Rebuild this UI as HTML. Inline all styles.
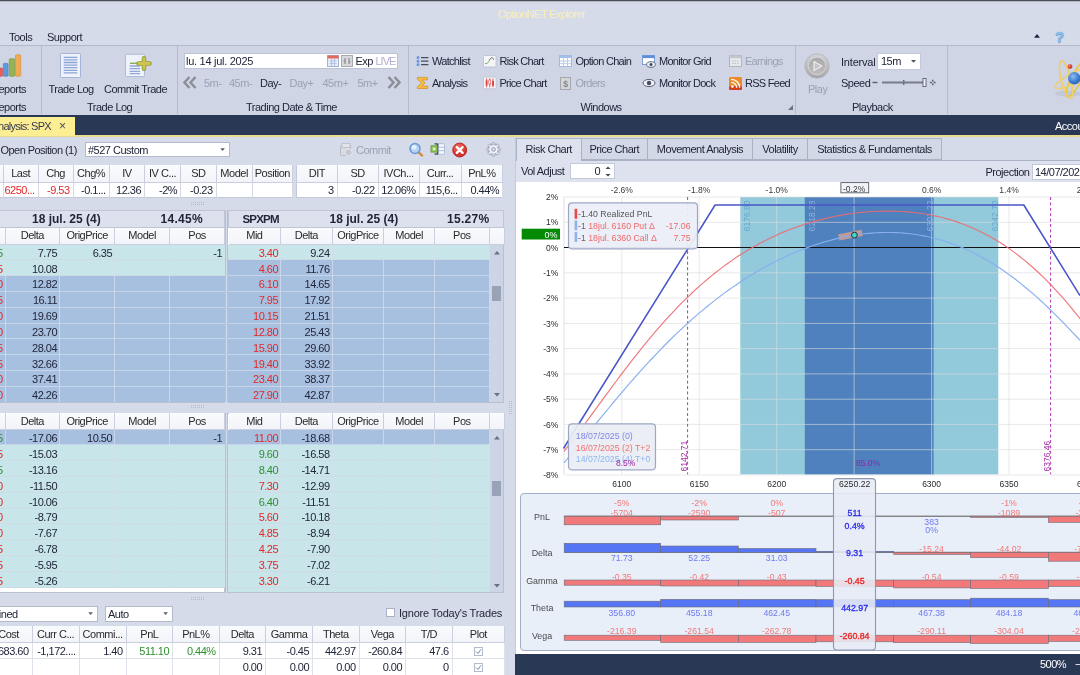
<!DOCTYPE html><html><head><meta charset="utf-8"><title>OptionNET Explorer</title><style>
*{box-sizing:border-box;margin:0;padding:0}
html,body{width:1080px;height:675px;overflow:hidden;background:#d6dbe9}
body{will-change:transform}
body{font-family:"Liberation Sans",sans-serif;font-size:11px;letter-spacing:-0.5px;color:#22263a;position:relative}
.a{position:absolute;white-space:nowrap}
.t{position:absolute;white-space:nowrap;line-height:14px;height:14px}
.c{text-align:center}.r{text-align:right}
.g{color:#9aa2b3}
.sep{position:absolute;width:1px;background:#b4bbcd;top:46px;height:68px}
.box{position:absolute;background:#fff;border:1px solid #b3bacb}
.hd{position:absolute;background:linear-gradient(#fafbfd,#f2f4f9);border-right:1px solid #c9cfde;border-bottom:1px solid #c9cfde;text-align:center;white-space:nowrap;overflow:hidden;color:#2a2a2a}
.cell{position:absolute;white-space:nowrap;overflow:hidden;text-align:right;padding-right:3px}
.red{color:#e02828}.grn{color:#2f8f2f}
.ch{font-family:"Liberation Sans",sans-serif;letter-spacing:0}
svg{position:absolute;overflow:visible}
</style></head><body>
<div class="a" style="left:0;top:0;width:1080px;height:1px;background:#4d4d55"></div>
<div class="a" style="left:0;top:1px;width:1080px;height:1px;background:#8e93a0;opacity:.5"></div>
<div class="t " style="left:498px;top:7px;color:#fbefb9;letter-spacing:-0.6px">OptionNET Explorer</div>
<div class="t " style="left:9px;top:30px;">Tools</div>
<div class="t " style="left:47px;top:30px;">Support</div>
<div class="a" style="left:0;top:45px;width:1080px;height:70px;background:#cfd5e5;border-top:1px solid #b1b9cb"></div>
<div class="sep" style="left:41px"></div>
<div class="sep" style="left:177px"></div>
<div class="sep" style="left:408px"></div>
<div class="sep" style="left:795px"></div>
<div class="sep" style="left:947px"></div>
<div class="a" style="left:0;top:115px;width:1080px;height:21px;background:#293955"></div>
<div class="a" style="left:0;top:135px;width:1080px;height:2px;background:#e9dc8f"></div>
<div class="a" style="left:0;top:117px;width:75px;height:19px;background:#fdee94"></div>
<div class="t " style="left:-8.5px;top:119px;color:#333a50;letter-spacing:-0.75px">Analysis: SPX</div>
<div class="t " style="left:59px;top:118.5px;font-size:12px;color:#44495c;letter-spacing:0">×</div>
<div class="t " style="left:1055px;top:119px;color:#fff">Account</div>
<div class="t " style="left:-9px;top:82px;">Reports</div>
<div class="t " style="left:-9px;top:100px;">Reports</div>
<div class="t " style="left:48.5px;top:82px;">Trade Log</div>
<div class="t " style="left:104px;top:82px;">Commit Trade</div>
<div class="t " style="left:87px;top:100px;">Trade Log</div>
<div class="t " style="left:246px;top:100px;">Trading Date &amp; Time</div>
<div class="t " style="left:580.5px;top:100px;">Windows</div>
<div class="t " style="left:852px;top:100px;">Playback</div>
<svg style="left:0;top:53px" width="22" height="25"><defs><linearGradient id="gl" x1="0" x2="1"><stop offset="0" stop-color="#fff" stop-opacity=".45"/><stop offset=".5" stop-color="#fff" stop-opacity="0"/><stop offset="1" stop-color="#000" stop-opacity=".12"/></linearGradient></defs><rect x="-2" y="15" width="4.7" height="8.3" rx="1" fill="#e8605a" stroke="#c94a44" stroke-width=".6"/><rect x="3.3" y="10.3" width="4.8" height="13" rx="1" fill="#5f98dc" stroke="#4a7ec0" stroke-width=".6"/><rect x="9.2" y="5.7" width="5.6" height="17.6" rx="1" fill="#93b356" stroke="#78963f" stroke-width=".6"/><rect x="15.5" y="1.7" width="5.2" height="21.6" rx="1" fill="#f0aa52" stroke="#d48a38" stroke-width=".6"/><rect x="-2" y="1" width="23" height="23" fill="url(#gl)" opacity=".0"/></svg>
<svg style="left:60px;top:53px" width="21" height="25"><rect x="0.5" y="0.5" width="20" height="24" rx="1" fill="#eef2fa" stroke="#a3b4d6"/><g stroke="#8ba3d6" stroke-width="1.3"><path d="M3.7 4.3h13.6M3.7 6.9h13.6M3.7 9.5h13.6M3.7 12.1h13.6M3.7 14.7h13.6M3.7 17.3h13.6M3.7 19.9h13.6"/></g></svg>
<svg style="left:125px;top:53px" width="25" height="25"><rect x="0.5" y="1.2" width="19" height="22.4" rx="1" fill="#eef2fa" stroke="#acb9d6"/><g stroke="#93a8d8" stroke-width="1.3"><path d="M4.6 13h10.4M4.6 15.7h10.4M4.6 18.3h10.4M4.6 20.6h10.4"/></g><path d="M5 10.3h8" stroke="#88ad52" stroke-width="1.4"/><path d="M19 5.2v10.6M13.5 10.5h11" stroke="#8fa138" stroke-width="4.6" stroke-linecap="round"/><path d="M19 5.4v10.2M13.7 10.5h10.6" stroke="#cfc24e" stroke-width="2.8" stroke-linecap="round"/></svg>
<div class="box" style="left:184px;top:52.8px;width:214px;height:16.6px;border-color:#bcc3d4"></div>
<div class="t " style="left:186px;top:54.3px;letter-spacing:-0.28px">lu. 14 jul. 2025</div>
<svg style="left:327px;top:55px" width="12" height="12"><rect x="0.5" y="0.5" width="11" height="11" fill="#e6ecf8" stroke="#a7b2d0"/><rect x="0.5" y="0.5" width="11" height="3" fill="#e36a58"/><path d="M2.5 6h7M2.5 8.5h7M4.5 4v7M7.5 4v7" stroke="#b4c4e4" stroke-width="1"/></svg>
<svg style="left:341px;top:55px" width="12" height="12"><rect x="0.5" y="0.5" width="11" height="11" fill="#d9d9dd" stroke="#a9a9b2"/><path d="M4 3v6M8 3v6M4 6h-1.5M8 7h1.5" stroke="#7d7d88" stroke-width="1"/></svg>
<div class="t " style="left:355.5px;top:54px;">Exp</div>
<div class="t " style="left:375.5px;top:54px;color:#b3aed0;letter-spacing:-1px">LIVE</div>
<svg style="left:183px;top:76px" width="14" height="13"><path d="M6.5 1L1.5 6.5l5 5.5M12.5 1l-5 5.5 5 5.5" fill="none" stroke="#8b8f98" stroke-width="2.5"/></svg>
<svg style="left:387px;top:76px" width="14" height="13"><path d="M1.5 1l5 5.5-5 5.5M7.5 1l5 5.5-5 5.5" fill="none" stroke="#8b8f98" stroke-width="2.5"/></svg>
<div class="t g" style="left:204px;top:75.5px;">5m-</div>
<div class="t g" style="left:229px;top:75.5px;">45m-</div>
<div class="t " style="left:260px;top:75.5px;">Day-</div>
<div class="t g" style="left:289.5px;top:75.5px;">Day+</div>
<div class="t g" style="left:322.5px;top:75.5px;">45m+</div>
<div class="t g" style="left:357.5px;top:75.5px;">5m+</div>
<div class="t " style="left:432px;top:54.4px;letter-spacing:-0.72px">Watchlist</div>
<div class="t " style="left:432px;top:76.4px;letter-spacing:-0.72px">Analysis</div>
<div class="t " style="left:499.5px;top:54.4px;letter-spacing:-0.72px">Risk Chart</div>
<div class="t " style="left:499.5px;top:76.4px;letter-spacing:-0.72px">Price Chart</div>
<div class="t " style="left:575.5px;top:54.4px;letter-spacing:-0.72px">Option Chain</div>
<div class="t g" style="left:575.5px;top:76.4px;letter-spacing:-0.72px">Orders</div>
<div class="t " style="left:659px;top:54.4px;letter-spacing:-0.72px">Monitor Grid</div>
<div class="t " style="left:659px;top:76.4px;letter-spacing:-0.72px">Monitor Dock</div>
<div class="t g" style="left:745px;top:54.4px;letter-spacing:-0.72px">Earnings</div>
<div class="t " style="left:745px;top:76.4px;letter-spacing:-0.72px">RSS Feed</div>
<svg style="left:416px;top:55px" width="13" height="12"><g fill="#6fa3e6" stroke="#4f84cc" stroke-width=".5"><circle cx="2" cy="2.6" r="1.2"/><circle cx="2" cy="6.2" r="1.2"/><circle cx="2" cy="9.7" r="1.2"/></g><path d="M5 2.6h7.4M5 6.2h7.4M5 9.7h7.4" stroke="#474d5e" stroke-width="1.3"/></svg>
<svg style="left:416px;top:76px" width="13" height="14"><path d="M1.4 1.4h10v2.5H6l3.2 3-3.4 3.2h6v2.4H1.4v-2l4.2-3.6-4.2-3.5z" fill="#f4bd4a" stroke="#d8932a" stroke-width=".8" stroke-linejoin="round"/></svg>
<svg style="left:483px;top:55px" width="14" height="13"><rect x="0.5" y="0.5" width="12.6" height="11.5" rx="1" fill="#f4f5f9" stroke="#c0c6d6"/><path d="M2 8.6c3 .2 3.2-1 4.4-3.4" fill="none" stroke="#7fb35c" stroke-width="1"/><path d="M6.4 5.2C7.6 2.6 9.6 1.6 10.6 4.6" fill="none" stroke="#5b6070" stroke-width="1"/></svg>
<svg style="left:483px;top:76px" width="14" height="14"><rect x="0.5" y="1" width="12.6" height="11.8" rx="1" fill="#f8f8fb" stroke="#c0c6d6"/><path d="M3.6 2.4v9M6.8 2.4v9M10 2.4v9" stroke="#d64040" stroke-width=".9"/><rect x="2.6" y="4.4" width="2" height="5" fill="#e04848"/><rect x="5.8" y="4" width="2" height="4" fill="#fff" stroke="#d64040" stroke-width=".6"/><rect x="9" y="4.8" width="2" height="5" fill="#e04848"/></svg>
<svg style="left:559px;top:55px" width="13" height="12"><rect x="0.5" y="0.5" width="12" height="11" fill="#fff" stroke="#a3b9df"/><rect x="0.5" y="0.5" width="12" height="2.5" fill="#a3c0ea"/><path d="M4.5 3v8M8.5 3v8M1 6h11M1 8.7h11" stroke="#b9cdec" stroke-width="1"/></svg>
<svg style="left:560px;top:77px" width="11" height="13"><rect x="0.5" y="0.5" width="10" height="12" fill="#d5d6da" stroke="#a5a7ad"/><text x="5.5" y="10" font-size="9" text-anchor="middle" fill="#85878f" font-family="Liberation Sans, sans-serif" font-weight="bold">$</text></svg>
<svg style="left:642px;top:55px" width="14" height="13"><rect x="0.5" y="0.5" width="12" height="9" fill="#fff" stroke="#7d9fd6"/><rect x="0.5" y="0.5" width="12" height="2.6" fill="#5f8fd8"/><ellipse cx="9" cy="9.5" rx="4.4" ry="2.8" fill="#eef1f8" stroke="#555c70" stroke-width=".9"/><circle cx="9" cy="9.5" r="1.5" fill="#3e4660"/></svg>
<svg style="left:642px;top:78px" width="14" height="10"><ellipse cx="7" cy="5" rx="6" ry="3.6" fill="#f2f3f8" stroke="#5b6174" stroke-width="1"/><circle cx="7" cy="5" r="2.2" fill="#454c66"/></svg>
<svg style="left:729px;top:55px" width="13" height="12"><rect x="0.5" y="0.5" width="12" height="11" fill="#e6e7ec" stroke="#b3b5bf"/><rect x="0.5" y="0.5" width="12" height="2.6" fill="#c3c5cf"/><path d="M3 6h7M3 8.5h7" stroke="#bfc1cb" stroke-width="1.2" stroke-dasharray="1.5 1"/></svg>
<svg style="left:729px;top:77px" width="13" height="13"><rect x="0" y="0" width="13" height="13" rx="1.5" fill="#ee8a2a"/><rect x="0" y="9" width="13" height="4" rx="1.5" fill="#d4401e"/><circle cx="3.4" cy="9.6" r="1.3" fill="#fff"/><path d="M2.3 5.4a5.4 5.4 0 0 1 5.4 5.4M2.3 2.4a8.4 8.4 0 0 1 8.4 8.4" fill="none" stroke="#fff" stroke-width="1.4"/></svg>
<svg style="left:788px;top:105px" width="5" height="5"><path d="M5 0v5H0z" fill="#6a7186"/></svg>
<svg style="left:804px;top:53px" width="26" height="26"><defs><linearGradient id="pg" x1="0" y1="0" x2="0" y2="1"><stop offset="0" stop-color="#d4d4d7"/><stop offset="1" stop-color="#a6a4a6"/></linearGradient><linearGradient id="pg2" x1="0" y1="0" x2="0" y2="1"><stop offset="0" stop-color="#a9a8aa"/><stop offset="1" stop-color="#bfbdbe"/></linearGradient></defs><circle cx="13" cy="13" r="12.2" fill="url(#pg)" stroke="#b0b2ba" stroke-width=".8"/><circle cx="13" cy="13" r="8.8" fill="url(#pg2)" stroke="#d8d9dd" stroke-width=".8"/><path d="M10 8.4l7.8 4.6-7.8 4.6z" fill="#c4c5ca" stroke="#efeff2" stroke-width="1.1" stroke-linejoin="round"/></svg>
<div class="t g" style="left:808px;top:82px;">Play</div>
<div class="t " style="left:841px;top:54.5px;letter-spacing:-0.2px">Interval</div>
<div class="t " style="left:841px;top:75.5px;">Speed</div>
<div class="box" style="left:877px;top:52.6px;width:43.5px;height:17px;border-color:#c3c9d8"></div>
<div class="t " style="left:881px;top:54px;">15m</div>
<svg style="left:910.5px;top:60px" width="5" height="3"><path d="M0 0h5L2.5 2.8z" fill="#4a5064"/></svg>
<svg style="left:872px;top:76px" width="66" height="13"><path d="M0.5 6.5h5" stroke="#5a6072" stroke-width="1.4"/><path d="M10 6.5h43" stroke="#777c8c" stroke-width="1.8"/><path d="M31.7 4v5" stroke="#6e7486" stroke-width="1.6"/><rect x="51" y="2.5" width="3" height="8" fill="#f4f5f9" stroke="#5a6072" stroke-width=".9"/><path d="M58 6.5h5.5M60.75 3.7v5.6" stroke="#5a6072" stroke-width="1.4"/><circle cx="60.75" cy="6.5" r="1" fill="#d3d9e8"/></svg>
<svg style="left:1034px;top:33.6px" width="6" height="4"><path d="M0 3.7h6L3 0z" fill="#1e2840"/></svg>
<div class="t " style="left:1055px;top:29.6px;font-weight:bold;font-size:15.5px;line-height:14px;color:#8dbdea;text-shadow:0 0 1px #5a92d0,0 1px 1px #6a9fd8;letter-spacing:0">?</div>
<svg style="left:0;top:0" width="1080" height="120"><defs><radialGradient id="sph" cx=".4" cy=".35" r=".7"><stop offset="0" stop-color="#8fbdf0"/><stop offset=".6" stop-color="#3f7fd2"/><stop offset="1" stop-color="#2f62ae"/></radialGradient></defs><ellipse cx="1068" cy="93.5" rx="13" ry="3" fill="#b9bfce" opacity=".6"/><g fill="none" stroke="#e9c344" stroke-width="1.5"><ellipse cx="1066" cy="79.7" rx="4.8" ry="19.2" transform="rotate(-14 1066 79.7)"/><ellipse cx="1074" cy="78" rx="21" ry="5.2" transform="rotate(-27 1074 78)"/><ellipse cx="1077" cy="78" rx="5.2" ry="21" transform="rotate(28 1077 78)"/></g><g fill="none" stroke="#f7e6a0" stroke-width=".5"><ellipse cx="1066" cy="79.7" rx="4.8" ry="19.2" transform="rotate(-14 1066 79.7)"/><ellipse cx="1074" cy="78" rx="21" ry="5.2" transform="rotate(-27 1074 78)"/></g><circle cx="1074.3" cy="78.3" r="6.2" fill="url(#sph)"/><circle cx="1070" cy="66.6" r="2.4" fill="#d8402e"/><circle cx="1069.4" cy="66" r=".9" fill="#f09080"/></svg>
<div class="t " style="left:0.5px;top:143px;letter-spacing:-0.55px">Open Position (1)</div>
<div class="box" style="left:85px;top:142px;width:145px;height:15px"></div>
<div class="t " style="left:88px;top:143px;">#527 Custom</div>
<svg style="left:220px;top:148px" width="6" height="4"><path d="M0.3 0.2h4.6L2.6 2.9z" fill="#555b70"/></svg>
<svg style="left:340px;top:143px" width="13" height="14"><rect x="0.5" y="2.5" width="10" height="10" rx="1" fill="#d9dbe2" stroke="#b7bac6"/><rect x="2" y="0.5" width="8" height="4" fill="#e3e5eb" stroke="#b7bac6" stroke-width=".8"/><circle cx="8.5" cy="9.5" r="3.6" fill="#c6c9d3" stroke="#e8e9ee"/></svg>
<div class="t g" style="left:356px;top:143px;">Commit</div>
<svg style="left:408px;top:142px" width="16" height="16"><path d="M10.6 10.4l3.4 3" stroke="#d09040" stroke-width="2.6" stroke-linecap="round"/><circle cx="7" cy="6.5" r="5" fill="#b5d2f2" stroke="#6b98d4" stroke-width="1.5"/><circle cx="6" cy="5.3" r="2.4" fill="#e4f0fc"/></svg>
<svg style="left:430px;top:143px" width="15" height="14"><rect x="8" y="0.7" width="6.5" height="10.6" rx="1" fill="#f6f8fc" stroke="#a9b9d8" stroke-width=".9"/><path d="M8 4.2h6.5M8 7.7h6.5" stroke="#a9b9d8" stroke-width=".9"/><path d="M7.6 0.6v10.8" stroke="#3f4a60" stroke-width="1.5"/><path d="M4.5 0.8h3M4.5 11.2h3" stroke="#3f4a60" stroke-width="1.2"/><rect x="1" y="2.8" width="6.3" height="6.3" fill="#8cc058" stroke="#5f9a34" stroke-width=".8"/><rect x="2.8" y="4.6" width="2.7" height="2.7" fill="#dff0c8"/></svg>
<svg style="left:452px;top:142px" width="16" height="16"><defs><radialGradient id="rx" cx=".4" cy=".3" r=".8"><stop offset="0" stop-color="#f46a5a"/><stop offset="1" stop-color="#c81e1e"/></radialGradient></defs><circle cx="7.7" cy="8" r="7" fill="url(#rx)" stroke="#b01c1c" stroke-width=".8"/><path d="M4.8 5.1l5.8 5.8M10.6 5.1l-5.8 5.8" stroke="#fff" stroke-width="2.3" stroke-linecap="round"/></svg>
<svg style="left:485.5px;top:142px" width="15" height="15"><g transform="translate(7.5 7.4)"><g fill="#f2f4f9" stroke="#8f98ae" stroke-width=".9"><rect x="-1.6" y="-6.6" width="3.2" height="3.6" rx=".9" transform="rotate(0)"/><rect x="-1.6" y="-6.6" width="3.2" height="3.6" rx=".9" transform="rotate(45)"/><rect x="-1.6" y="-6.6" width="3.2" height="3.6" rx=".9" transform="rotate(90)"/><rect x="-1.6" y="-6.6" width="3.2" height="3.6" rx=".9" transform="rotate(135)"/><rect x="-1.6" y="-6.6" width="3.2" height="3.6" rx=".9" transform="rotate(180)"/><rect x="-1.6" y="-6.6" width="3.2" height="3.6" rx=".9" transform="rotate(225)"/><rect x="-1.6" y="-6.6" width="3.2" height="3.6" rx=".9" transform="rotate(270)"/><rect x="-1.6" y="-6.6" width="3.2" height="3.6" rx=".9" transform="rotate(315)"/></g><circle r="4.6" fill="#f2f4f9" stroke="#8f98ae" stroke-width=".9"/><circle r="4.1" fill="#f2f4f9"/><circle r="1.9" fill="#d6dbe9" stroke="#8f98ae" stroke-width=".9"/></g></svg>
<div class="a" style="left:-2px;top:165px;width:295px;height:33px;background:#fff;border:1px solid #c3c9d9"></div>
<div class="hd" style="left:-32.4px;top:165px;width:36px;height:17.5px;line-height:16.5px;"></div>
<div class="cell " style="left:-32.4px;top:182.5px;width:36px;height:15.0px;line-height:15.0px;border-right:1px solid #d5d9e4;"></div>
<div class="hd" style="left:3.6px;top:165px;width:35px;height:17.5px;line-height:16.5px;">Last</div>
<div class="cell red" style="left:3.6px;top:182.5px;width:35px;height:15.0px;line-height:15.0px;border-right:1px solid #d5d9e4;">6250...</div>
<div class="hd" style="left:38.6px;top:165px;width:35px;height:17.5px;line-height:16.5px;">Chg</div>
<div class="cell red" style="left:38.6px;top:182.5px;width:35px;height:15.0px;line-height:15.0px;border-right:1px solid #d5d9e4;">-9.53</div>
<div class="hd" style="left:73.6px;top:165px;width:36px;height:17.5px;line-height:16.5px;">Chg%</div>
<div class="cell " style="left:73.6px;top:182.5px;width:36px;height:15.0px;line-height:15.0px;border-right:1px solid #d5d9e4;">-0.1...</div>
<div class="hd" style="left:109.6px;top:165px;width:35.5px;height:17.5px;line-height:16.5px;">IV</div>
<div class="cell " style="left:109.6px;top:182.5px;width:35.5px;height:15.0px;line-height:15.0px;border-right:1px solid #d5d9e4;">12.36</div>
<div class="hd" style="left:145.1px;top:165px;width:36.0px;height:17.5px;line-height:16.5px;">IV C...</div>
<div class="cell " style="left:145.1px;top:182.5px;width:36.0px;height:15.0px;line-height:15.0px;border-right:1px solid #d5d9e4;">-2%</div>
<div class="hd" style="left:181.1px;top:165px;width:35.5px;height:17.5px;line-height:16.5px;">SD</div>
<div class="cell " style="left:181.1px;top:182.5px;width:35.5px;height:15.0px;line-height:15.0px;border-right:1px solid #d5d9e4;">-0.23</div>
<div class="hd" style="left:216.6px;top:165px;width:36px;height:17.5px;line-height:16.5px;">Model</div>
<div class="cell " style="left:216.6px;top:182.5px;width:36px;height:15.0px;line-height:15.0px;border-right:1px solid #d5d9e4;"></div>
<div class="hd" style="left:252.6px;top:165px;width:40.5px;height:17.5px;line-height:16.5px;">Position</div>
<div class="cell " style="left:252.6px;top:182.5px;width:40.5px;height:15.0px;line-height:15.0px;border-right:1px solid #d5d9e4;"></div>
<div class="a" style="left:296px;top:165px;width:207px;height:33px;background:#fff;border:1px solid #c3c9d9"></div>
<div class="hd" style="left:297.1px;top:165px;width:40.5px;height:17.5px;line-height:16.5px;">DIT</div>
<div class="cell " style="left:297.1px;top:182.5px;width:40.5px;height:15.0px;line-height:15.0px;border-right:1px solid #d5d9e4;">3</div>
<div class="hd" style="left:337.6px;top:165px;width:41px;height:17.5px;line-height:16.5px;">SD</div>
<div class="cell " style="left:337.6px;top:182.5px;width:41px;height:15.0px;line-height:15.0px;border-right:1px solid #d5d9e4;">-0.22</div>
<div class="hd" style="left:378.6px;top:165px;width:41px;height:17.5px;line-height:16.5px;">IVCh...</div>
<div class="cell " style="left:378.6px;top:182.5px;width:41px;height:15.0px;line-height:15.0px;border-right:1px solid #d5d9e4;">12.06%</div>
<div class="hd" style="left:419.6px;top:165px;width:42px;height:17.5px;line-height:16.5px;">Curr...</div>
<div class="cell " style="left:419.6px;top:182.5px;width:42px;height:15.0px;line-height:15.0px;border-right:1px solid #d5d9e4;">115,6...</div>
<div class="hd" style="left:461.6px;top:165px;width:41.5px;height:17.5px;line-height:16.5px;">PnL%</div>
<div class="cell " style="left:461.6px;top:182.5px;width:41.5px;height:15.0px;line-height:15.0px;border-right:1px solid #d5d9e4;">0.44%</div>
<svg style="left:191px;top:201.5px" width="13" height="3"><path d="M0 0.5h13M0 2.5h13" stroke="#b4bbcc" stroke-width="1" stroke-dasharray="1 1"/></svg>
<svg style="left:191px;top:405.0px" width="13" height="3"><path d="M0 0.5h13M0 2.5h13" stroke="#b4bbcc" stroke-width="1" stroke-dasharray="1 1"/></svg>
<svg style="left:191px;top:597.0px" width="13" height="3"><path d="M0 0.5h13M0 2.5h13" stroke="#b4bbcc" stroke-width="1" stroke-dasharray="1 1"/></svg>
<div class="a" style="left:-2px;top:209.5px;width:227px;height:193.2px;background:#fff;border:1px solid #b9c0d0;border-left:0"></div>
<div class="hd" style="left:-49.4px;top:227px;width:55px;height:17.5px;line-height:16.5px;"></div>
<div class="hd" style="left:5.6px;top:227px;width:54.5px;height:17.5px;line-height:16.5px;">Delta</div>
<div class="hd" style="left:60.1px;top:227px;width:55.0px;height:17.5px;line-height:16.5px;">OrigPrice</div>
<div class="hd" style="left:115.1px;top:227px;width:55.0px;height:17.5px;line-height:16.5px;">Model</div>
<div class="hd" style="left:170.1px;top:227px;width:55.0px;height:17.5px;line-height:16.5px;">Pos</div>
<div class="a" style="left:-50px;top:244.50px;width:274.5px;height:31.64px;background:#c8e5ea"></div>
<div class="a" style="left:-50px;top:276.14px;width:274.5px;height:125.56px;background:#a8c0e0"></div>
<div class="a" style="left:-50px;top:259.32px;width:274.5px;height:1px;background:#cddbe4"></div>
<div class="cell grn" style="left:-49.4px;top:245.8px;width:55px;height:15.819999999999993px;line-height:15.819999999999993px;">5</div>
<div class="cell " style="left:5.6px;top:245.8px;width:54.5px;height:15.819999999999993px;line-height:15.819999999999993px;">7.75</div>
<div class="cell " style="left:60.1px;top:245.8px;width:55.0px;height:15.819999999999993px;line-height:15.819999999999993px;">6.35</div>
<div class="cell " style="left:170.1px;top:245.8px;width:55.0px;height:15.819999999999993px;line-height:15.819999999999993px;">-1</div>
<div class="a" style="left:-50px;top:275.14px;width:274.5px;height:1px;background:#cddbe4"></div>
<div class="cell red" style="left:-49.4px;top:261.62px;width:55px;height:15.819999999999993px;line-height:15.819999999999993px;">5</div>
<div class="cell " style="left:5.6px;top:261.62px;width:54.5px;height:15.819999999999993px;line-height:15.819999999999993px;">10.08</div>
<div class="a" style="left:-50px;top:290.96px;width:274.5px;height:1px;background:#c6d5ea"></div>
<div class="cell red" style="left:-49.4px;top:277.44px;width:55px;height:15.819999999999993px;line-height:15.819999999999993px;">0</div>
<div class="cell " style="left:5.6px;top:277.44px;width:54.5px;height:15.819999999999993px;line-height:15.819999999999993px;">12.82</div>
<div class="a" style="left:-50px;top:306.78px;width:274.5px;height:1px;background:#c6d5ea"></div>
<div class="cell red" style="left:-49.4px;top:293.26px;width:55px;height:15.819999999999993px;line-height:15.819999999999993px;">5</div>
<div class="cell " style="left:5.6px;top:293.26px;width:54.5px;height:15.819999999999993px;line-height:15.819999999999993px;">16.11</div>
<div class="a" style="left:-50px;top:322.60px;width:274.5px;height:1px;background:#c6d5ea"></div>
<div class="cell red" style="left:-49.4px;top:309.08px;width:55px;height:15.819999999999993px;line-height:15.819999999999993px;">0</div>
<div class="cell " style="left:5.6px;top:309.08px;width:54.5px;height:15.819999999999993px;line-height:15.819999999999993px;">19.69</div>
<div class="a" style="left:-50px;top:338.42px;width:274.5px;height:1px;background:#c6d5ea"></div>
<div class="cell red" style="left:-49.4px;top:324.9px;width:55px;height:15.82000000000005px;line-height:15.82000000000005px;">0</div>
<div class="cell " style="left:5.6px;top:324.9px;width:54.5px;height:15.82000000000005px;line-height:15.82000000000005px;">23.70</div>
<div class="a" style="left:-50px;top:354.24px;width:274.5px;height:1px;background:#c6d5ea"></div>
<div class="cell red" style="left:-49.4px;top:340.72px;width:55px;height:15.819999999999993px;line-height:15.819999999999993px;">5</div>
<div class="cell " style="left:5.6px;top:340.72px;width:54.5px;height:15.819999999999993px;line-height:15.819999999999993px;">28.04</div>
<div class="a" style="left:-50px;top:370.06px;width:274.5px;height:1px;background:#c6d5ea"></div>
<div class="cell red" style="left:-49.4px;top:356.54px;width:55px;height:15.819999999999993px;line-height:15.819999999999993px;">5</div>
<div class="cell " style="left:5.6px;top:356.54px;width:54.5px;height:15.819999999999993px;line-height:15.819999999999993px;">32.66</div>
<div class="a" style="left:-50px;top:385.88px;width:274.5px;height:1px;background:#c6d5ea"></div>
<div class="cell red" style="left:-49.4px;top:372.36px;width:55px;height:15.819999999999993px;line-height:15.819999999999993px;">0</div>
<div class="cell " style="left:5.6px;top:372.36px;width:54.5px;height:15.819999999999993px;line-height:15.819999999999993px;">37.41</div>
<div class="cell red" style="left:-49.4px;top:388.18px;width:55px;height:15.819999999999993px;line-height:15.819999999999993px;">0</div>
<div class="cell " style="left:5.6px;top:388.18px;width:54.5px;height:15.819999999999993px;line-height:15.819999999999993px;">42.26</div>
<div class="a" style="left:4.6px;top:244.5px;width:1px;height:157.20px;background:rgba(214,222,236,.75)"></div>
<div class="a" style="left:59.1px;top:244.5px;width:1px;height:157.20px;background:rgba(214,222,236,.75)"></div>
<div class="a" style="left:114.1px;top:244.5px;width:1px;height:157.20px;background:rgba(214,222,236,.75)"></div>
<div class="a" style="left:169.1px;top:244.5px;width:1px;height:157.20px;background:rgba(214,222,236,.75)"></div>
<div class="a" style="left:228px;top:209.5px;width:276px;height:192.8px;background:#fff;border:1px solid #b9c0d0"></div>
<div class="a" style="left:228px;top:227px;width:276px;height:175.7px;background:#fff;border:1px solid #b9c0d0;border-left:0"></div>
<div class="hd" style="left:228.6px;top:227px;width:52.5px;height:17.5px;line-height:16.5px;">Mid</div>
<div class="hd" style="left:281.1px;top:227px;width:51.5px;height:17.5px;line-height:16.5px;">Delta</div>
<div class="hd" style="left:332.6px;top:227px;width:51.5px;height:17.5px;line-height:16.5px;">OrigPrice</div>
<div class="hd" style="left:384.1px;top:227px;width:51.0px;height:17.5px;line-height:16.5px;">Model</div>
<div class="hd" style="left:435.1px;top:227px;width:54.5px;height:17.5px;line-height:16.5px;">Pos</div>
<div class="a" style="left:228px;top:244.50px;width:275px;height:15.82px;background:#c8e5ea"></div>
<div class="a" style="left:228px;top:260.32px;width:275px;height:141.38px;background:#a8c0e0"></div>
<div class="a" style="left:228px;top:259.32px;width:275px;height:1px;background:#cddbe4"></div>
<div class="cell red" style="left:228.6px;top:245.8px;width:52.5px;height:15.819999999999993px;line-height:15.819999999999993px;">3.40</div>
<div class="cell " style="left:281.1px;top:245.8px;width:51.5px;height:15.819999999999993px;line-height:15.819999999999993px;">9.24</div>
<div class="a" style="left:228px;top:275.14px;width:275px;height:1px;background:#c6d5ea"></div>
<div class="cell red" style="left:228.6px;top:261.62px;width:52.5px;height:15.819999999999993px;line-height:15.819999999999993px;">4.60</div>
<div class="cell " style="left:281.1px;top:261.62px;width:51.5px;height:15.819999999999993px;line-height:15.819999999999993px;">11.76</div>
<div class="a" style="left:228px;top:290.96px;width:275px;height:1px;background:#c6d5ea"></div>
<div class="cell red" style="left:228.6px;top:277.44px;width:52.5px;height:15.819999999999993px;line-height:15.819999999999993px;">6.10</div>
<div class="cell " style="left:281.1px;top:277.44px;width:51.5px;height:15.819999999999993px;line-height:15.819999999999993px;">14.65</div>
<div class="a" style="left:228px;top:306.78px;width:275px;height:1px;background:#c6d5ea"></div>
<div class="cell red" style="left:228.6px;top:293.26px;width:52.5px;height:15.819999999999993px;line-height:15.819999999999993px;">7.95</div>
<div class="cell " style="left:281.1px;top:293.26px;width:51.5px;height:15.819999999999993px;line-height:15.819999999999993px;">17.92</div>
<div class="a" style="left:228px;top:322.60px;width:275px;height:1px;background:#c6d5ea"></div>
<div class="cell red" style="left:228.6px;top:309.08px;width:52.5px;height:15.819999999999993px;line-height:15.819999999999993px;">10.15</div>
<div class="cell " style="left:281.1px;top:309.08px;width:51.5px;height:15.819999999999993px;line-height:15.819999999999993px;">21.51</div>
<div class="a" style="left:228px;top:338.42px;width:275px;height:1px;background:#c6d5ea"></div>
<div class="cell red" style="left:228.6px;top:324.9px;width:52.5px;height:15.82000000000005px;line-height:15.82000000000005px;">12.80</div>
<div class="cell " style="left:281.1px;top:324.9px;width:51.5px;height:15.82000000000005px;line-height:15.82000000000005px;">25.43</div>
<div class="a" style="left:228px;top:354.24px;width:275px;height:1px;background:#c6d5ea"></div>
<div class="cell red" style="left:228.6px;top:340.72px;width:52.5px;height:15.819999999999993px;line-height:15.819999999999993px;">15.90</div>
<div class="cell " style="left:281.1px;top:340.72px;width:51.5px;height:15.819999999999993px;line-height:15.819999999999993px;">29.60</div>
<div class="a" style="left:228px;top:370.06px;width:275px;height:1px;background:#c6d5ea"></div>
<div class="cell red" style="left:228.6px;top:356.54px;width:52.5px;height:15.819999999999993px;line-height:15.819999999999993px;">19.40</div>
<div class="cell " style="left:281.1px;top:356.54px;width:51.5px;height:15.819999999999993px;line-height:15.819999999999993px;">33.92</div>
<div class="a" style="left:228px;top:385.88px;width:275px;height:1px;background:#c6d5ea"></div>
<div class="cell red" style="left:228.6px;top:372.36px;width:52.5px;height:15.819999999999993px;line-height:15.819999999999993px;">23.40</div>
<div class="cell " style="left:281.1px;top:372.36px;width:51.5px;height:15.819999999999993px;line-height:15.819999999999993px;">38.37</div>
<div class="cell red" style="left:228.6px;top:388.18px;width:52.5px;height:15.819999999999993px;line-height:15.819999999999993px;">27.90</div>
<div class="cell " style="left:281.1px;top:388.18px;width:51.5px;height:15.819999999999993px;line-height:15.819999999999993px;">42.87</div>
<div class="a" style="left:280.1px;top:244.5px;width:1px;height:157.20px;background:rgba(214,222,236,.75)"></div>
<div class="a" style="left:331.6px;top:244.5px;width:1px;height:157.20px;background:rgba(214,222,236,.75)"></div>
<div class="a" style="left:383.1px;top:244.5px;width:1px;height:157.20px;background:rgba(214,222,236,.75)"></div>
<div class="a" style="left:434.1px;top:244.5px;width:1px;height:157.20px;background:rgba(214,222,236,.75)"></div>
<div class="a" style="left:488.6px;top:244.5px;width:1px;height:157.20px;background:rgba(214,222,236,.75)"></div>
<div class="hd" style="left:489.6px;top:227px;width:15px;height:17.5px;line-height:16.5px;"></div>
<div class="a" style="left:489.6px;top:244.5px;width:13.9px;height:157.2px;background:#cdd4e5"></div>
<svg style="left:493.8px;top:250.8px" width="6" height="4"><path d="M0 3.5h6L3 0z" fill="#66708a"/></svg>
<svg style="left:493.8px;top:392.9px" width="6" height="4"><path d="M0 0h6L3 3.5z" fill="#66708a"/></svg>
<div class="a" style="left:492px;top:286px;width:9px;height:14.5px;background:#98a3b8"></div>
<div class="a" style="left:-2px;top:209.5px;width:227px;height:18px;background:#dce1ed;border:1px solid #bfc6d6;border-left:0"></div>
<div class="t " style="left:32px;top:211.5px;font-weight:bold;font-size:12px;letter-spacing:0">18 jul. 25 (4)</div>
<div class="t " style="left:160.5px;top:211.5px;font-weight:bold;font-size:12px;letter-spacing:0;letter-spacing:0.3px">14.45%</div>
<div class="a" style="left:228px;top:209.5px;width:276px;height:18px;background:#dce1ed;border:1px solid #bfc6d6"></div>
<div class="t " style="left:242.5px;top:211.5px;font-weight:bold;font-size:11.5px;letter-spacing:-0.8px">SPXPM</div>
<div class="t " style="left:329.5px;top:211.5px;font-weight:bold;font-size:12px;letter-spacing:0">18 jul. 25 (4)</div>
<div class="t " style="left:447px;top:211.5px;font-weight:bold;font-size:12px;letter-spacing:0;letter-spacing:0.3px">15.27%</div>
<div class="a" style="left:-2px;top:412.5px;width:227px;height:180.79999999999995px;background:#fff;border:1px solid #b9c0d0;border-left:0"></div>
<div class="hd" style="left:-49.4px;top:412.5px;width:55px;height:17.0px;line-height:16.0px;"></div>
<div class="hd" style="left:5.6px;top:412.5px;width:54.5px;height:17.0px;line-height:16.0px;">Delta</div>
<div class="hd" style="left:60.1px;top:412.5px;width:55.0px;height:17.0px;line-height:16.0px;">OrigPrice</div>
<div class="hd" style="left:115.1px;top:412.5px;width:55.0px;height:17.0px;line-height:16.0px;">Model</div>
<div class="hd" style="left:170.1px;top:412.5px;width:55.0px;height:17.0px;line-height:16.0px;">Pos</div>
<div class="a" style="left:-50px;top:429.50px;width:274.5px;height:15.82px;background:#a8c0e0"></div>
<div class="a" style="left:-50px;top:445.32px;width:274.5px;height:142.38px;background:#c8e5ea"></div>
<div class="a" style="left:-50px;top:444.32px;width:274.5px;height:1px;background:#c6d5ea"></div>
<div class="cell grn" style="left:-49.4px;top:431.3px;width:55px;height:15.819999999999993px;line-height:15.819999999999993px;">5</div>
<div class="cell " style="left:5.6px;top:431.3px;width:54.5px;height:15.819999999999993px;line-height:15.819999999999993px;">-17.06</div>
<div class="cell " style="left:60.1px;top:431.3px;width:55.0px;height:15.819999999999993px;line-height:15.819999999999993px;">10.50</div>
<div class="cell " style="left:170.1px;top:431.3px;width:55.0px;height:15.819999999999993px;line-height:15.819999999999993px;">-1</div>
<div class="a" style="left:-50px;top:460.14px;width:274.5px;height:1px;background:#cddbe4"></div>
<div class="cell red" style="left:-49.4px;top:447.12px;width:55px;height:15.819999999999993px;line-height:15.819999999999993px;">5</div>
<div class="cell " style="left:5.6px;top:447.12px;width:54.5px;height:15.819999999999993px;line-height:15.819999999999993px;">-15.03</div>
<div class="a" style="left:-50px;top:475.96px;width:274.5px;height:1px;background:#cddbe4"></div>
<div class="cell grn" style="left:-49.4px;top:462.94px;width:55px;height:15.819999999999993px;line-height:15.819999999999993px;">5</div>
<div class="cell " style="left:5.6px;top:462.94px;width:54.5px;height:15.819999999999993px;line-height:15.819999999999993px;">-13.16</div>
<div class="a" style="left:-50px;top:491.78px;width:274.5px;height:1px;background:#cddbe4"></div>
<div class="cell red" style="left:-49.4px;top:478.76px;width:55px;height:15.819999999999993px;line-height:15.819999999999993px;">0</div>
<div class="cell " style="left:5.6px;top:478.76px;width:54.5px;height:15.819999999999993px;line-height:15.819999999999993px;">-11.50</div>
<div class="a" style="left:-50px;top:507.60px;width:274.5px;height:1px;background:#cddbe4"></div>
<div class="cell red" style="left:-49.4px;top:494.58px;width:55px;height:15.819999999999993px;line-height:15.819999999999993px;">0</div>
<div class="cell " style="left:5.6px;top:494.58px;width:54.5px;height:15.819999999999993px;line-height:15.819999999999993px;">-10.06</div>
<div class="a" style="left:-50px;top:523.42px;width:274.5px;height:1px;background:#cddbe4"></div>
<div class="cell red" style="left:-49.4px;top:510.4px;width:55px;height:15.82000000000005px;line-height:15.82000000000005px;">0</div>
<div class="cell " style="left:5.6px;top:510.4px;width:54.5px;height:15.82000000000005px;line-height:15.82000000000005px;">-8.79</div>
<div class="a" style="left:-50px;top:539.24px;width:274.5px;height:1px;background:#cddbe4"></div>
<div class="cell red" style="left:-49.4px;top:526.22px;width:55px;height:15.819999999999936px;line-height:15.819999999999936px;">0</div>
<div class="cell " style="left:5.6px;top:526.22px;width:54.5px;height:15.819999999999936px;line-height:15.819999999999936px;">-7.67</div>
<div class="a" style="left:-50px;top:555.06px;width:274.5px;height:1px;background:#cddbe4"></div>
<div class="cell red" style="left:-49.4px;top:542.04px;width:55px;height:15.82000000000005px;line-height:15.82000000000005px;">5</div>
<div class="cell " style="left:5.6px;top:542.04px;width:54.5px;height:15.82000000000005px;line-height:15.82000000000005px;">-6.78</div>
<div class="a" style="left:-50px;top:570.88px;width:274.5px;height:1px;background:#cddbe4"></div>
<div class="cell red" style="left:-49.4px;top:557.86px;width:55px;height:15.819999999999936px;line-height:15.819999999999936px;">5</div>
<div class="cell " style="left:5.6px;top:557.86px;width:54.5px;height:15.819999999999936px;line-height:15.819999999999936px;">-5.95</div>
<div class="a" style="left:-50px;top:586.70px;width:274.5px;height:1px;background:#cddbe4"></div>
<div class="cell red" style="left:-49.4px;top:573.68px;width:55px;height:15.82000000000005px;line-height:15.82000000000005px;">5</div>
<div class="cell " style="left:5.6px;top:573.68px;width:54.5px;height:15.82000000000005px;line-height:15.82000000000005px;">-5.26</div>
<div class="a" style="left:4.6px;top:429.5px;width:1px;height:158.20px;background:rgba(214,222,236,.75)"></div>
<div class="a" style="left:59.1px;top:429.5px;width:1px;height:158.20px;background:rgba(214,222,236,.75)"></div>
<div class="a" style="left:114.1px;top:429.5px;width:1px;height:158.20px;background:rgba(214,222,236,.75)"></div>
<div class="a" style="left:169.1px;top:429.5px;width:1px;height:158.20px;background:rgba(214,222,236,.75)"></div>
<div class="a" style="left:228px;top:412.5px;width:276px;height:180.8px;background:#c8e5ea;border:1px solid #b9c0d0"></div>
<div class="a" style="left:228px;top:412.5px;width:276px;height:180.79999999999995px;background:#fff;border:1px solid #b9c0d0;border-left:0"></div>
<div class="hd" style="left:228.6px;top:412.5px;width:52.5px;height:17.0px;line-height:16.0px;">Mid</div>
<div class="hd" style="left:281.1px;top:412.5px;width:51.5px;height:17.0px;line-height:16.0px;">Delta</div>
<div class="hd" style="left:332.6px;top:412.5px;width:51.5px;height:17.0px;line-height:16.0px;">OrigPrice</div>
<div class="hd" style="left:384.1px;top:412.5px;width:51.0px;height:17.0px;line-height:16.0px;">Model</div>
<div class="hd" style="left:435.1px;top:412.5px;width:54.5px;height:17.0px;line-height:16.0px;">Pos</div>
<div class="a" style="left:228px;top:429.50px;width:275px;height:15.82px;background:#a8c0e0"></div>
<div class="a" style="left:228px;top:445.32px;width:275px;height:146.98px;background:#c8e5ea"></div>
<div class="a" style="left:228px;top:444.32px;width:275px;height:1px;background:#c6d5ea"></div>
<div class="cell red" style="left:228.6px;top:431.3px;width:52.5px;height:15.819999999999993px;line-height:15.819999999999993px;">11.00</div>
<div class="cell " style="left:281.1px;top:431.3px;width:51.5px;height:15.819999999999993px;line-height:15.819999999999993px;">-18.68</div>
<div class="a" style="left:228px;top:460.14px;width:275px;height:1px;background:#cddbe4"></div>
<div class="cell grn" style="left:228.6px;top:447.12px;width:52.5px;height:15.819999999999993px;line-height:15.819999999999993px;">9.60</div>
<div class="cell " style="left:281.1px;top:447.12px;width:51.5px;height:15.819999999999993px;line-height:15.819999999999993px;">-16.58</div>
<div class="a" style="left:228px;top:475.96px;width:275px;height:1px;background:#cddbe4"></div>
<div class="cell grn" style="left:228.6px;top:462.94px;width:52.5px;height:15.819999999999993px;line-height:15.819999999999993px;">8.40</div>
<div class="cell " style="left:281.1px;top:462.94px;width:51.5px;height:15.819999999999993px;line-height:15.819999999999993px;">-14.71</div>
<div class="a" style="left:228px;top:491.78px;width:275px;height:1px;background:#cddbe4"></div>
<div class="cell red" style="left:228.6px;top:478.76px;width:52.5px;height:15.819999999999993px;line-height:15.819999999999993px;">7.30</div>
<div class="cell " style="left:281.1px;top:478.76px;width:51.5px;height:15.819999999999993px;line-height:15.819999999999993px;">-12.99</div>
<div class="a" style="left:228px;top:507.60px;width:275px;height:1px;background:#cddbe4"></div>
<div class="cell grn" style="left:228.6px;top:494.58px;width:52.5px;height:15.819999999999993px;line-height:15.819999999999993px;">6.40</div>
<div class="cell " style="left:281.1px;top:494.58px;width:51.5px;height:15.819999999999993px;line-height:15.819999999999993px;">-11.51</div>
<div class="a" style="left:228px;top:523.42px;width:275px;height:1px;background:#cddbe4"></div>
<div class="cell red" style="left:228.6px;top:510.4px;width:52.5px;height:15.82000000000005px;line-height:15.82000000000005px;">5.60</div>
<div class="cell " style="left:281.1px;top:510.4px;width:51.5px;height:15.82000000000005px;line-height:15.82000000000005px;">-10.18</div>
<div class="a" style="left:228px;top:539.24px;width:275px;height:1px;background:#cddbe4"></div>
<div class="cell red" style="left:228.6px;top:526.22px;width:52.5px;height:15.819999999999936px;line-height:15.819999999999936px;">4.85</div>
<div class="cell " style="left:281.1px;top:526.22px;width:51.5px;height:15.819999999999936px;line-height:15.819999999999936px;">-8.94</div>
<div class="a" style="left:228px;top:555.06px;width:275px;height:1px;background:#cddbe4"></div>
<div class="cell red" style="left:228.6px;top:542.04px;width:52.5px;height:15.82000000000005px;line-height:15.82000000000005px;">4.25</div>
<div class="cell " style="left:281.1px;top:542.04px;width:51.5px;height:15.82000000000005px;line-height:15.82000000000005px;">-7.90</div>
<div class="a" style="left:228px;top:570.88px;width:275px;height:1px;background:#cddbe4"></div>
<div class="cell red" style="left:228.6px;top:557.86px;width:52.5px;height:15.819999999999936px;line-height:15.819999999999936px;">3.75</div>
<div class="cell " style="left:281.1px;top:557.86px;width:51.5px;height:15.819999999999936px;line-height:15.819999999999936px;">-7.02</div>
<div class="a" style="left:228px;top:586.70px;width:275px;height:1px;background:#cddbe4"></div>
<div class="cell red" style="left:228.6px;top:573.68px;width:52.5px;height:15.82000000000005px;line-height:15.82000000000005px;">3.30</div>
<div class="cell " style="left:281.1px;top:573.68px;width:51.5px;height:15.82000000000005px;line-height:15.82000000000005px;">-6.21</div>
<div class="a" style="left:280.1px;top:429.5px;width:1px;height:158.20px;background:rgba(214,222,236,.75)"></div>
<div class="a" style="left:331.6px;top:429.5px;width:1px;height:158.20px;background:rgba(214,222,236,.75)"></div>
<div class="a" style="left:383.1px;top:429.5px;width:1px;height:158.20px;background:rgba(214,222,236,.75)"></div>
<div class="a" style="left:434.1px;top:429.5px;width:1px;height:158.20px;background:rgba(214,222,236,.75)"></div>
<div class="a" style="left:488.6px;top:429.5px;width:1px;height:158.20px;background:rgba(214,222,236,.75)"></div>
<div class="hd" style="left:489.6px;top:412.5px;width:15px;height:17.0px;line-height:16.0px;"></div>
<div class="a" style="left:489.6px;top:429.5px;width:13.9px;height:162.79999999999995px;background:#cdd4e5"></div>
<svg style="left:493.8px;top:435.8px" width="6" height="4"><path d="M0 3.5h6L3 0z" fill="#66708a"/></svg>
<svg style="left:493.8px;top:583.5px" width="6" height="4"><path d="M0 0h6L3 3.5z" fill="#66708a"/></svg>
<div class="a" style="left:492px;top:481px;width:9px;height:15px;background:#98a3b8"></div>
<div class="a" style="left:225px;top:209.5px;width:3px;height:192.8px;background:#d6dbe9;border-left:1px solid #b9c0d0;border-right:1px solid #b9c0d0"></div>
<div class="a" style="left:225px;top:412.5px;width:3px;height:180.8px;background:#d6dbe9;border-left:1px solid #b9c0d0;border-right:1px solid #b9c0d0"></div>
<div class="box" style="left:-20px;top:606px;width:117.5px;height:15.5px"></div>
<div class="t " style="left:-28.5px;top:607px;">Combined</div>
<svg style="left:88px;top:612px" width="6" height="4"><path d="M0.3 0.2h4.6L2.6 2.9z" fill="#555b70"/></svg>
<div class="box" style="left:105px;top:606px;width:68px;height:15.5px"></div>
<div class="t " style="left:108px;top:607px;">Auto</div>
<svg style="left:163px;top:612px" width="6" height="4"><path d="M0.3 0.2h4.6L2.6 2.9z" fill="#555b70"/></svg>
<div class="box" style="left:386px;top:608px;width:9px;height:9px;border-color:#a9b1c4"></div>
<div class="t " style="left:399px;top:606px;letter-spacing:-0.22px">Ignore Today's Trades</div>
<div class="a" style="left:-2px;top:625.5px;width:507px;height:60px;background:#fff;border:1px solid #c3c9d9"></div>
<div class="hd" style="left:-14.4px;top:625.5px;width:47px;height:17.5px;line-height:16.5px;">Cost</div>
<div class="cell " style="left:-14.4px;top:643px;width:47px;height:15.5px;line-height:15.5px;border-right:1px solid #dde1ea;border-bottom:1px solid #dde1ea;line-height:17.5px;">683.60</div>
<div class="cell " style="left:-14.4px;top:658.5px;width:47px;height:16.5px;line-height:16.5px;border-right:1px solid #dde1ea;"></div>
<div class="hd" style="left:32.6px;top:625.5px;width:47px;height:17.5px;line-height:16.5px;">Curr C...</div>
<div class="cell " style="left:32.6px;top:643px;width:47px;height:15.5px;line-height:15.5px;border-right:1px solid #dde1ea;border-bottom:1px solid #dde1ea;line-height:17.5px;">-1,172....</div>
<div class="cell " style="left:32.6px;top:658.5px;width:47px;height:16.5px;line-height:16.5px;border-right:1px solid #dde1ea;"></div>
<div class="hd" style="left:79.6px;top:625.5px;width:47px;height:17.5px;line-height:16.5px;">Commi...</div>
<div class="cell " style="left:79.6px;top:643px;width:47px;height:15.5px;line-height:15.5px;border-right:1px solid #dde1ea;border-bottom:1px solid #dde1ea;line-height:17.5px;">1.40</div>
<div class="cell " style="left:79.6px;top:658.5px;width:47px;height:16.5px;line-height:16.5px;border-right:1px solid #dde1ea;"></div>
<div class="hd" style="left:126.6px;top:625.5px;width:46.5px;height:17.5px;line-height:16.5px;">PnL</div>
<div class="cell grn" style="left:126.6px;top:643px;width:46.5px;height:15.5px;line-height:15.5px;border-right:1px solid #dde1ea;border-bottom:1px solid #dde1ea;line-height:17.5px;">511.10</div>
<div class="cell " style="left:126.6px;top:658.5px;width:46.5px;height:16.5px;line-height:16.5px;border-right:1px solid #dde1ea;"></div>
<div class="hd" style="left:173.1px;top:625.5px;width:46.5px;height:17.5px;line-height:16.5px;">PnL%</div>
<div class="cell grn" style="left:173.1px;top:643px;width:46.5px;height:15.5px;line-height:15.5px;border-right:1px solid #dde1ea;border-bottom:1px solid #dde1ea;line-height:17.5px;">0.44%</div>
<div class="cell " style="left:173.1px;top:658.5px;width:46.5px;height:16.5px;line-height:16.5px;border-right:1px solid #dde1ea;"></div>
<div class="hd" style="left:219.6px;top:625.5px;width:46.5px;height:17.5px;line-height:16.5px;">Delta</div>
<div class="cell " style="left:219.6px;top:643px;width:46.5px;height:15.5px;line-height:15.5px;border-right:1px solid #dde1ea;border-bottom:1px solid #dde1ea;line-height:17.5px;">9.31</div>
<div class="cell " style="left:219.6px;top:658.5px;width:46.5px;height:16.5px;line-height:16.5px;border-right:1px solid #dde1ea;">0.00</div>
<div class="hd" style="left:266.1px;top:625.5px;width:47.0px;height:17.5px;line-height:16.5px;">Gamma</div>
<div class="cell " style="left:266.1px;top:643px;width:47.0px;height:15.5px;line-height:15.5px;border-right:1px solid #dde1ea;border-bottom:1px solid #dde1ea;line-height:17.5px;">-0.45</div>
<div class="cell " style="left:266.1px;top:658.5px;width:47.0px;height:16.5px;line-height:16.5px;border-right:1px solid #dde1ea;">0.00</div>
<div class="hd" style="left:313.1px;top:625.5px;width:46.5px;height:17.5px;line-height:16.5px;">Theta</div>
<div class="cell " style="left:313.1px;top:643px;width:46.5px;height:15.5px;line-height:15.5px;border-right:1px solid #dde1ea;border-bottom:1px solid #dde1ea;line-height:17.5px;">442.97</div>
<div class="cell " style="left:313.1px;top:658.5px;width:46.5px;height:16.5px;line-height:16.5px;border-right:1px solid #dde1ea;">0.00</div>
<div class="hd" style="left:359.6px;top:625.5px;width:46.5px;height:17.5px;line-height:16.5px;">Vega</div>
<div class="cell " style="left:359.6px;top:643px;width:46.5px;height:15.5px;line-height:15.5px;border-right:1px solid #dde1ea;border-bottom:1px solid #dde1ea;line-height:17.5px;">-260.84</div>
<div class="cell " style="left:359.6px;top:658.5px;width:46.5px;height:16.5px;line-height:16.5px;border-right:1px solid #dde1ea;">0.00</div>
<div class="hd" style="left:406.1px;top:625.5px;width:46.5px;height:17.5px;line-height:16.5px;">T/D</div>
<div class="cell " style="left:406.1px;top:643px;width:46.5px;height:15.5px;line-height:15.5px;border-right:1px solid #dde1ea;border-bottom:1px solid #dde1ea;line-height:17.5px;">47.6</div>
<div class="cell " style="left:406.1px;top:658.5px;width:46.5px;height:16.5px;line-height:16.5px;border-right:1px solid #dde1ea;">0</div>
<div class="hd" style="left:452.6px;top:625.5px;width:52.5px;height:17.5px;line-height:16.5px;">Plot</div>
<div class="cell " style="left:452.6px;top:643px;width:52.5px;height:15.5px;line-height:15.5px;border-right:1px solid #dde1ea;border-bottom:1px solid #dde1ea;line-height:17.5px;"></div>
<div class="cell " style="left:452.6px;top:658.5px;width:52.5px;height:16.5px;line-height:16.5px;border-right:1px solid #dde1ea;"></div>
<svg style="left:474px;top:646.5px" width="9" height="9"><rect x="0.5" y="0.5" width="8" height="8" fill="#fff" stroke="#b3bacb"/><path d="M2 4.5l2 2 3-4.2" fill="none" stroke="#7d8598" stroke-width="1"/></svg>
<svg style="left:474px;top:662.5px" width="9" height="9"><rect x="0.5" y="0.5" width="8" height="8" fill="#fff" stroke="#b3bacb"/><path d="M2 4.5l2 2 3-4.2" fill="none" stroke="#7d8598" stroke-width="1"/></svg>
<svg style="left:509px;top:400.5px" width="3" height="13"><path d="M0.5 0v13M2.5 0v13" stroke="#b4bbcc" stroke-width="1" stroke-dasharray="1 1"/></svg>
<div class="a" style="left:515.3px;top:137px;width:1.2px;height:538px;background:#c3cad9"></div>
<div class="a" style="left:516px;top:137px;width:564px;height:45px;background:#d6dbe9"></div>
<div class="a" style="left:516px;top:159.5px;width:564px;height:1px;background:#aab2c5"></div>
<div class="a c" style="left:516px;top:138px;width:65.5px;height:22.5px;line-height:21px;background:#dde2ee;border:1px solid #aab2c5;border-bottom:0">Risk Chart</div>
<div class="a c" style="left:580.5px;top:138px;width:67.5px;height:22px;line-height:21px;background:#d2d8e6;border:1px solid #aab2c5">Price Chart</div>
<div class="a c" style="left:647px;top:138px;width:106px;height:22px;line-height:21px;background:#d2d8e6;border:1px solid #aab2c5">Movement Analysis</div>
<div class="a c" style="left:752px;top:138px;width:56px;height:22px;line-height:21px;background:#d2d8e6;border:1px solid #aab2c5">Volatility</div>
<div class="a c" style="left:807px;top:138px;width:135px;height:22px;line-height:21px;background:#d2d8e6;border:1px solid #aab2c5">Statistics &amp; Fundamentals</div>
<div class="a" style="left:516px;top:160.5px;width:564px;height:21.5px;background:#dde2ee"></div>
<div class="t " style="left:521px;top:164.3px;">Vol Adjust</div>
<div class="box" style="left:570px;top:163px;width:44.5px;height:16px;border-color:#c3c9d8"></div>
<div class="t r" style="left:570px;top:164.3px;width:30px;">0</div>
<svg style="left:605px;top:166px" width="6" height="11"><path d="M0.5 3L3 0.5 5.5 3zM0.5 8l2.5 2.5L5.5 8z" fill="#3f4658"/></svg>
<div class="t " style="left:985.5px;top:164.5px;">Projection</div>
<div class="box" style="left:1032px;top:164px;width:70px;height:15.5px;border-color:#c3c9d8"></div>
<div class="t " style="left:1035px;top:164.8px;">14/07/2025</div>
<svg class="ch" style="left:516px;top:182px" width="564" height="310" viewBox="516 182 564 310">
<rect x="516" y="182" width="564" height="310" fill="#fff"/>
<rect x="740.3" y="197" width="258.0" height="277.4" fill="#92cadb"/>
<rect x="804.8" y="197" width="128.80000000000007" height="277.4" fill="#4e81bd"/>
<path d="M564 197.0H1080" stroke="#dcdcdc" stroke-opacity=".62" stroke-width="1"/>
<path d="M564 222.3H1080" stroke="#dcdcdc" stroke-opacity=".62" stroke-width="1"/>
<path d="M564 247.5H1080" stroke="#dcdcdc" stroke-opacity=".62" stroke-width="1"/>
<path d="M564 272.8H1080" stroke="#dcdcdc" stroke-opacity=".62" stroke-width="1"/>
<path d="M564 298.1H1080" stroke="#dcdcdc" stroke-opacity=".62" stroke-width="1"/>
<path d="M564 323.4H1080" stroke="#dcdcdc" stroke-opacity=".62" stroke-width="1"/>
<path d="M564 348.6H1080" stroke="#dcdcdc" stroke-opacity=".62" stroke-width="1"/>
<path d="M564 373.9H1080" stroke="#dcdcdc" stroke-opacity=".62" stroke-width="1"/>
<path d="M564 399.2H1080" stroke="#dcdcdc" stroke-opacity=".62" stroke-width="1"/>
<path d="M564 424.4H1080" stroke="#dcdcdc" stroke-opacity=".62" stroke-width="1"/>
<path d="M564 449.7H1080" stroke="#dcdcdc" stroke-opacity=".62" stroke-width="1"/>
<path d="M564 475.0H1080" stroke="#dcdcdc" stroke-opacity=".62" stroke-width="1"/>
<path d="M621.8 197V474.4" stroke="#dcdcdc" stroke-opacity=".62" stroke-width="1"/>
<path d="M699.2 197V474.4" stroke="#dcdcdc" stroke-opacity=".62" stroke-width="1"/>
<path d="M776.7 197V474.4" stroke="#dcdcdc" stroke-opacity=".62" stroke-width="1"/>
<path d="M854.1 197V474.4" stroke="#dcdcdc" stroke-opacity=".62" stroke-width="1"/>
<path d="M931.6 197V474.4" stroke="#dcdcdc" stroke-opacity=".62" stroke-width="1"/>
<path d="M1009.0 197V474.4" stroke="#dcdcdc" stroke-opacity=".62" stroke-width="1"/>
<path d="M564 197V474.4" stroke="#e0e0e0" stroke-width="1"/>
<text transform="translate(749.5 200.5) rotate(-90)" font-size="8.5" fill="#64a7cf" text-anchor="end">6176.80</text>
<text transform="translate(814.5 200.5) rotate(-90)" font-size="8.5" fill="#8fb3de" text-anchor="end">6218.28</text>
<text transform="translate(932.5 200.5) rotate(-90)" font-size="8.5" fill="#8fb3de" text-anchor="end">6301.22</text>
<text transform="translate(997.5 200.5) rotate(-90)" font-size="8.5" fill="#64a7cf" text-anchor="end">6342.70</text>
<path d="M564 247.5H1080" stroke="#111" stroke-width="1"/>
<path d="M687.6 197V474.4M1050.6 197V474.4" stroke="#b23ab2" stroke-width="1" stroke-dasharray="3 2.4"/>
<text transform="translate(687 471.5) rotate(-90)" font-size="8.5" fill="#a22aa2" text-anchor="start">6142.71</text>
<text transform="translate(1049.5 471.5) rotate(-90)" font-size="8.5" fill="#a22aa2" text-anchor="start">6376.46</text>
<text x="616" y="466" font-size="8.5" fill="#a22aa2">8.5%</text>
<text x="856" y="466" font-size="8.5" fill="#8a2aa8">85.0%</text>
<path d="M564.0 462.9 L568.0 458.0 L572.0 453.1 L576.0 448.2 L580.0 443.3 L584.0 438.4 L588.0 433.4 L592.0 428.5 L596.0 423.6 L600.0 418.7 L604.0 413.8 L608.0 409.0 L612.0 404.1 L616.0 399.3 L620.0 394.6 L624.0 389.9 L628.0 385.2 L632.0 380.6 L636.0 376.1 L640.0 371.6 L644.0 367.2 L648.0 362.8 L652.0 358.5 L656.0 354.3 L660.0 350.1 L664.0 346.0 L668.0 342.0 L672.0 338.0 L676.0 334.2 L680.0 330.3 L684.0 326.6 L688.0 323.0 L692.0 319.4 L696.0 315.9 L700.0 312.4 L704.0 309.1 L708.0 305.8 L712.0 302.6 L716.0 299.4 L720.0 296.4 L724.0 293.4 L728.0 290.5 L732.0 287.6 L736.0 284.9 L740.0 282.2 L744.0 279.6 L748.0 277.0 L752.0 274.6 L756.0 272.2 L760.0 269.8 L764.0 267.6 L768.0 265.4 L772.0 263.3 L776.0 261.2 L780.0 259.3 L784.0 257.4 L788.0 255.5 L792.0 253.8 L796.0 252.1 L800.0 250.4 L804.0 248.9 L808.0 247.4 L812.0 246.0 L816.0 244.6 L820.0 243.3 L824.0 242.1 L828.0 241.0 L832.0 239.9 L836.0 238.9 L840.0 237.9 L844.0 237.1 L848.0 236.3 L852.0 235.6 L856.0 234.9 L860.0 234.3 L864.0 233.8 L868.0 233.4 L872.0 233.1 L876.0 232.8 L880.0 232.6 L884.0 232.5 L888.0 232.5 L892.0 232.5 L896.0 232.6 L900.0 232.8 L904.0 233.1 L908.0 233.5 L912.0 234.0 L916.0 234.5 L920.0 235.2 L924.0 235.9 L928.0 236.7 L932.0 237.7 L936.0 238.7 L940.0 239.8 L944.0 241.0 L948.0 242.3 L952.0 243.7 L956.0 245.2 L960.0 246.7 L964.0 248.4 L968.0 250.2 L972.0 252.1 L976.0 254.1 L980.0 256.2 L984.0 258.4 L988.0 260.8 L992.0 263.2 L996.0 265.7 L1000.0 268.3 L1004.0 271.0 L1008.0 273.9 L1012.0 276.8 L1016.0 279.8 L1020.0 282.9 L1024.0 286.2 L1028.0 289.5 L1032.0 292.9 L1036.0 296.4 L1040.0 300.0 L1044.0 303.7 L1048.0 307.5 L1052.0 311.4 L1056.0 315.3 L1060.0 319.3 L1064.0 323.4 L1068.0 327.6 L1072.0 331.8 L1076.0 336.0 L1080.0 340.4" fill="none" stroke="#86aef0" stroke-width="1.15"/><path d="M564.0 451.3 L568.0 446.2 L572.0 441.0 L576.0 435.7 L580.0 430.4 L584.0 425.0 L588.0 419.6 L592.0 414.1 L596.0 408.7 L600.0 403.2 L604.0 397.7 L608.0 392.3 L612.0 386.9 L616.0 381.5 L620.0 376.1 L624.0 370.8 L628.0 365.6 L632.0 360.4 L636.0 355.3 L640.0 350.3 L644.0 345.3 L648.0 340.4 L652.0 335.7 L656.0 330.9 L660.0 326.3 L664.0 321.8 L668.0 317.4 L672.0 313.1 L676.0 308.8 L680.0 304.7 L684.0 300.7 L688.0 296.8 L692.0 293.0 L696.0 289.2 L700.0 285.6 L704.0 282.1 L708.0 278.7 L712.0 275.4 L716.0 272.2 L720.0 269.1 L724.0 266.1 L728.0 263.2 L732.0 260.4 L736.0 257.6 L740.0 255.0 L744.0 252.5 L748.0 250.1 L752.0 247.7 L756.0 245.4 L760.0 243.3 L764.0 241.2 L768.0 239.2 L772.0 237.2 L776.0 235.4 L780.0 233.6 L784.0 231.9 L788.0 230.3 L792.0 228.8 L796.0 227.3 L800.0 225.9 L804.0 224.5 L808.0 223.3 L812.0 222.1 L816.0 220.9 L820.0 219.9 L824.0 218.9 L828.0 217.9 L832.0 217.0 L836.0 216.2 L840.0 215.4 L844.0 214.7 L848.0 214.1 L852.0 213.5 L856.0 213.0 L860.0 212.5 L864.0 212.1 L868.0 211.8 L872.0 211.5 L876.0 211.3 L880.0 211.2 L884.0 211.1 L888.0 211.0 L892.0 211.1 L896.0 211.2 L900.0 211.3 L904.0 211.6 L908.0 211.9 L912.0 212.2 L916.0 212.7 L920.0 213.2 L924.0 213.8 L928.0 214.5 L932.0 215.3 L936.0 216.1 L940.0 217.0 L944.0 218.0 L948.0 219.1 L952.0 220.3 L956.0 221.6 L960.0 223.0 L964.0 224.5 L968.0 226.0 L972.0 227.7 L976.0 229.5 L980.0 231.4 L984.0 233.4 L988.0 235.5 L992.0 237.7 L996.0 240.1 L1000.0 242.5 L1004.0 245.1 L1008.0 247.8 L1012.0 250.6 L1016.0 253.6 L1020.0 256.7 L1024.0 259.9 L1028.0 263.2 L1032.0 266.7 L1036.0 270.3 L1040.0 274.0 L1044.0 277.9 L1048.0 281.9 L1052.0 286.0 L1056.0 290.3 L1060.0 294.7 L1064.0 299.2 L1068.0 303.9 L1072.0 308.7 L1076.0 313.6 L1080.0 318.7" fill="none" stroke="#ee6a72" stroke-opacity=".92" stroke-width="1.15"/><path d="M563.5 448.5L715.1 205H1023.8L1080 295.6" fill="none" stroke="#4a55c8" stroke-width="1.55" stroke-linejoin="round"/>
<path d="M838.8 237.4L862.2 232.8" stroke="#bd9a98" stroke-width="6.3"/>
<path d="M838.8 237.6L862.2 233.4" stroke="#86aef0" stroke-width="1"/>
<circle cx="854.4" cy="235.1" r="2.9" fill="#40d8cc" stroke="#26303a" stroke-width="1"/>
<text x="621.8" y="193.1" font-size="8.5" fill="#3a3a3a" text-anchor="middle">-2.6%</text>
<text x="699.2" y="193.1" font-size="8.5" fill="#3a3a3a" text-anchor="middle">-1.8%</text>
<text x="776.7" y="193.1" font-size="8.5" fill="#3a3a3a" text-anchor="middle">-1.0%</text>
<rect x="840.9" y="182.6" width="27.8" height="10.2" fill="#f1f3f8" stroke="#555a66" stroke-width=".9"/>
<text x="854.1" y="192.1" font-size="8.5" fill="#3a3a3a" text-anchor="middle">-0.2%</text>
<text x="931.6" y="193.1" font-size="8.5" fill="#3a3a3a" text-anchor="middle">0.6%</text>
<text x="1009.0" y="193.1" font-size="8.5" fill="#3a3a3a" text-anchor="middle">1.4%</text>
<text x="1086.5" y="193.1" font-size="8.5" fill="#3a3a3a" text-anchor="middle">2.2%</text>
<text x="558.3" y="200.1" font-size="8.5" fill="#2a2a2a" text-anchor="end">2%</text>
<text x="558.3" y="225.4" font-size="8.5" fill="#2a2a2a" text-anchor="end">1%</text>
<text x="558.3" y="250.6" font-size="8.5" fill="#2a2a2a" text-anchor="end">0%</text>
<text x="558.3" y="275.9" font-size="8.5" fill="#2a2a2a" text-anchor="end">-1%</text>
<text x="558.3" y="301.2" font-size="8.5" fill="#2a2a2a" text-anchor="end">-2%</text>
<text x="558.3" y="326.5" font-size="8.5" fill="#2a2a2a" text-anchor="end">-3%</text>
<text x="558.3" y="351.7" font-size="8.5" fill="#2a2a2a" text-anchor="end">-3%</text>
<text x="558.3" y="377.0" font-size="8.5" fill="#2a2a2a" text-anchor="end">-4%</text>
<text x="558.3" y="402.3" font-size="8.5" fill="#2a2a2a" text-anchor="end">-5%</text>
<text x="558.3" y="427.5" font-size="8.5" fill="#2a2a2a" text-anchor="end">-6%</text>
<text x="558.3" y="452.8" font-size="8.5" fill="#2a2a2a" text-anchor="end">-7%</text>
<text x="558.3" y="478.1" font-size="8.5" fill="#2a2a2a" text-anchor="end">-8%</text>
<rect x="521.7" y="228.7" width="38.3" height="10.8" fill="#048a04"/>
<text x="557.5" y="237.5" font-size="9" fill="#fff" text-anchor="end">0%</text>
<text x="621.8" y="486.8" font-size="8.5" fill="#2a2a2a" text-anchor="middle">6100</text>
<text x="699.2" y="486.8" font-size="8.5" fill="#2a2a2a" text-anchor="middle">6150</text>
<text x="776.7" y="486.8" font-size="8.5" fill="#2a2a2a" text-anchor="middle">6200</text>
<text x="931.6" y="486.8" font-size="8.5" fill="#2a2a2a" text-anchor="middle">6300</text>
<text x="1009.0" y="486.8" font-size="8.5" fill="#2a2a2a" text-anchor="middle">6350</text>
<text x="1086.5" y="486.8" font-size="8.5" fill="#2a2a2a" text-anchor="middle">6400</text>
<rect x="568.5" y="202.8" width="129" height="46" rx="3.5" fill="#ebeef6" fill-opacity=".94" stroke="#9ca8c2" stroke-width="1.2"/>
<rect x="574.6" y="208.8" width="2.6" height="10" fill="#e84848"/><text x="578" y="217.4" font-size="8.75" fill="#555">-1.40 Realized PnL</text>
<rect x="574.6" y="220.5" width="2.6" height="9.8" fill="#8fb1ee"/><text x="578" y="229.1" font-size="8.75" fill="#666">-1 <tspan fill="#f06a6a">18jul. 6160 Put Δ</tspan></text><text x="690.5" y="229.1" font-size="8.75" fill="#f06a6a" text-anchor="end">-17.06</text>
<rect x="574.6" y="232.1" width="2.6" height="9.8" fill="#8fb1ee"/><text x="578" y="240.8" font-size="8.75" fill="#666">-1 <tspan fill="#f06a6a">18jul. 6360 Call Δ</tspan></text><text x="690.5" y="240.8" font-size="8.75" fill="#f06a6a" text-anchor="end">7.75</text>
<rect x="568.5" y="423.8" width="87" height="46" rx="3.5" fill="#eaedf4" fill-opacity=".93" stroke="#9ca8c2" stroke-width="1.2"/>
<text x="575.8" y="439" font-size="8.75" fill="#8086e6">18/07/2025 (0)</text>
<text x="575.8" y="450.7" font-size="8.75" fill="#f07272">16/07/2025 (2) T+2</text>
<text x="575.8" y="462.4" font-size="8.75" fill="#8db7f2">14/07/2025 (4) T+0</text>
<text x="616" y="466" font-size="8.5" fill="#a22aa2">8.5%</text>
</svg>
<div class="a" style="left:516px;top:492px;width:564px;height:162px;background:#fff"></div>
<div class="a" style="left:519.5px;top:492.6px;width:570px;height:158px;background:#e8eff9;border:1.3px solid #a3adc4;border-radius:4px"></div>
<svg class="ch" style="left:516px;top:475px" width="564" height="180" viewBox="516 475 564 180">
<path d="M564.2 516.2H1080" stroke="#555" stroke-width="1"/>
<rect x="564.2" y="516.2" width="96.5" height="8.6" fill="#f27979" stroke="#6b6b78" stroke-width=".6"/>
<rect x="660.7" y="516.2" width="77.6" height="3.8" fill="#f27979" stroke="#6b6b78" stroke-width=".6"/>
<rect x="970.6" y="516.2" width="77.8" height="1.2" fill="#f27979" stroke="#6b6b78" stroke-width=".6"/>
<rect x="1048.4" y="516.2" width="77.6" height="6.2" fill="#f27979" stroke="#6b6b78" stroke-width=".6"/>
<path d="M564.2 552.3H1080" stroke="#555" stroke-width=".8"/>
<rect x="564.2" y="543.3" width="96.5" height="9.0" fill="#5575f4" stroke="#6b6b78" stroke-width=".6"/>
<rect x="660.7" y="546.0" width="77.6" height="6.3" fill="#5575f4" stroke="#6b6b78" stroke-width=".6"/>
<rect x="738.3" y="548.5" width="77.7" height="3.8" fill="#5575f4" stroke="#6b6b78" stroke-width=".6"/>
<rect x="816" y="551.3" width="77.7" height="1.0" fill="#5575f4" stroke="#6b6b78" stroke-width=".6"/>
<rect x="893.7" y="552.3" width="76.9" height="2.1" fill="#f27979" stroke="#6b6b78" stroke-width=".6"/>
<rect x="970.6" y="552.3" width="77.8" height="5.3" fill="#f27979" stroke="#6b6b78" stroke-width=".6"/>
<rect x="1048.4" y="552.3" width="77.6" height="8.9" fill="#f27979" stroke="#6b6b78" stroke-width=".6"/>
<rect x="564.2" y="580.0" width="96.5" height="5.2" fill="#f27979" stroke="#6b6b78" stroke-width=".6"/>
<rect x="660.7" y="580.0" width="77.6" height="6.0" fill="#f27979" stroke="#6b6b78" stroke-width=".6"/>
<rect x="738.3" y="580.0" width="77.7" height="6.0" fill="#f27979" stroke="#6b6b78" stroke-width=".6"/>
<rect x="816" y="580.0" width="77.7" height="6.4" fill="#f27979" stroke="#6b6b78" stroke-width=".6"/>
<rect x="893.7" y="580.0" width="76.9" height="7.9" fill="#f27979" stroke="#6b6b78" stroke-width=".6"/>
<rect x="970.6" y="580.0" width="77.8" height="8.4" fill="#f27979" stroke="#6b6b78" stroke-width=".6"/>
<rect x="1048.4" y="580.0" width="77.6" height="6.4" fill="#f27979" stroke="#6b6b78" stroke-width=".6"/>
<rect x="564.2" y="601.2" width="96.5" height="5.8" fill="#5575f4" stroke="#6b6b78" stroke-width=".6"/>
<rect x="660.7" y="599.4" width="77.6" height="7.6" fill="#5575f4" stroke="#6b6b78" stroke-width=".6"/>
<rect x="738.3" y="599.4" width="77.7" height="7.6" fill="#5575f4" stroke="#6b6b78" stroke-width=".6"/>
<rect x="816" y="599.7" width="77.7" height="7.3" fill="#5575f4" stroke="#6b6b78" stroke-width=".6"/>
<rect x="893.7" y="599.7" width="76.9" height="7.3" fill="#5575f4" stroke="#6b6b78" stroke-width=".6"/>
<rect x="970.6" y="598.2" width="77.8" height="8.8" fill="#5575f4" stroke="#6b6b78" stroke-width=".6"/>
<rect x="1048.4" y="599.7" width="77.6" height="7.3" fill="#5575f4" stroke="#6b6b78" stroke-width=".6"/>
<rect x="564.2" y="635.2" width="96.5" height="5.1" fill="#f27979" stroke="#6b6b78" stroke-width=".6"/>
<rect x="660.7" y="635.2" width="77.6" height="7.2" fill="#f27979" stroke="#6b6b78" stroke-width=".6"/>
<rect x="738.3" y="635.2" width="77.7" height="7.2" fill="#f27979" stroke="#6b6b78" stroke-width=".6"/>
<rect x="816" y="635.2" width="77.7" height="6.6" fill="#f27979" stroke="#6b6b78" stroke-width=".6"/>
<rect x="893.7" y="635.2" width="76.9" height="7.5" fill="#f27979" stroke="#6b6b78" stroke-width=".6"/>
<rect x="970.6" y="635.2" width="77.8" height="8.3" fill="#f27979" stroke="#6b6b78" stroke-width=".6"/>
<rect x="1048.4" y="635.2" width="77.6" height="6.3" fill="#f27979" stroke="#6b6b78" stroke-width=".6"/>
<text x="542.0" y="520.2" font-size="8.9" fill="#4a4a4a" color="#4a4a4a" text-anchor="middle">PnL</text>
<text x="542.0" y="556.2" font-size="8.9" fill="#4a4a4a" color="#4a4a4a" text-anchor="middle">Delta</text>
<text x="542.0" y="583.7" font-size="8.9" fill="#4a4a4a" color="#4a4a4a" text-anchor="middle">Gamma</text>
<text x="542.0" y="610.9" font-size="8.9" fill="#4a4a4a" color="#4a4a4a" text-anchor="middle">Theta</text>
<text x="542.0" y="638.7" font-size="8.9" fill="#4a4a4a" color="#4a4a4a" text-anchor="middle">Vega</text>
<text x="621.8" y="505.7" font-size="8.7" fill="#f27878" color="#f27878" text-anchor="middle">-5%</text>
<text x="621.8" y="515.8" font-size="8.7" fill="#f27878" color="#f27878" text-anchor="middle">-5704</text>
<text x="699.2" y="505.7" font-size="8.7" fill="#f27878" color="#f27878" text-anchor="middle">-2%</text>
<text x="699.2" y="515.8" font-size="8.7" fill="#f27878" color="#f27878" text-anchor="middle">-2590</text>
<text x="776.7" y="505.7" font-size="8.7" fill="#f27878" color="#f27878" text-anchor="middle">0%</text>
<text x="776.7" y="515.8" font-size="8.7" fill="#f27878" color="#f27878" text-anchor="middle">-507</text>
<text x="1009.0" y="505.7" font-size="8.7" fill="#f27878" color="#f27878" text-anchor="middle">-1%</text>
<text x="1009.0" y="515.8" font-size="8.7" fill="#f27878" color="#f27878" text-anchor="middle">-1089</text>
<text x="1086.5" y="505.7" font-size="8.7" fill="#f27878" color="#f27878" text-anchor="middle">-3%</text>
<text x="1086.5" y="515.8" font-size="8.7" fill="#f27878" color="#f27878" text-anchor="middle">-3361</text>
<text x="931.6" y="524.7" font-size="8.7" fill="#6f7af0" color="#6f7af0" text-anchor="middle">383</text>
<text x="931.6" y="533.0" font-size="8.7" fill="#6f7af0" color="#6f7af0" text-anchor="middle">0%</text>
<text x="621.8" y="561.2" font-size="8.7" fill="#6f7af0" color="#6f7af0" text-anchor="middle">71.73</text>
<text x="699.2" y="561.2" font-size="8.7" fill="#6f7af0" color="#6f7af0" text-anchor="middle">52.25</text>
<text x="776.7" y="561.2" font-size="8.7" fill="#6f7af0" color="#6f7af0" text-anchor="middle">31.03</text>
<text x="931.6" y="552.2" font-size="8.7" fill="#f27878" color="#f27878" text-anchor="middle">-15.24</text>
<text x="1009.0" y="552.2" font-size="8.7" fill="#f27878" color="#f27878" text-anchor="middle">-44.02</text>
<text x="1086.5" y="552.2" font-size="8.7" fill="#f27878" color="#f27878" text-anchor="middle">-72.51</text>
<text x="621.8" y="579.8" font-size="8.7" fill="#f27878" color="#f27878" text-anchor="middle">-0.35</text>
<text x="699.2" y="579.8" font-size="8.7" fill="#f27878" color="#f27878" text-anchor="middle">-0.42</text>
<text x="776.7" y="579.8" font-size="8.7" fill="#f27878" color="#f27878" text-anchor="middle">-0.43</text>
<text x="931.6" y="579.8" font-size="8.7" fill="#f27878" color="#f27878" text-anchor="middle">-0.54</text>
<text x="1009.0" y="579.8" font-size="8.7" fill="#f27878" color="#f27878" text-anchor="middle">-0.59</text>
<text x="1086.5" y="579.8" font-size="8.7" fill="#f27878" color="#f27878" text-anchor="middle">-0.44</text>
<text x="621.8" y="615.9" font-size="8.7" fill="#6f7af0" color="#6f7af0" text-anchor="middle">356.80</text>
<text x="699.2" y="615.9" font-size="8.7" fill="#6f7af0" color="#6f7af0" text-anchor="middle">455.18</text>
<text x="776.7" y="615.9" font-size="8.7" fill="#6f7af0" color="#6f7af0" text-anchor="middle">462.45</text>
<text x="931.6" y="615.9" font-size="8.7" fill="#6f7af0" color="#6f7af0" text-anchor="middle">467.38</text>
<text x="1009.0" y="615.9" font-size="8.7" fill="#6f7af0" color="#6f7af0" text-anchor="middle">484.18</text>
<text x="1086.5" y="615.9" font-size="8.7" fill="#6f7af0" color="#6f7af0" text-anchor="middle">462.11</text>
<text x="621.8" y="634.2" font-size="8.7" fill="#f27878" color="#f27878" text-anchor="middle">-216.39</text>
<text x="699.2" y="634.2" font-size="8.7" fill="#f27878" color="#f27878" text-anchor="middle">-261.54</text>
<text x="776.7" y="634.2" font-size="8.7" fill="#f27878" color="#f27878" text-anchor="middle">-262.78</text>
<text x="931.6" y="634.2" font-size="8.7" fill="#f27878" color="#f27878" text-anchor="middle">-290.11</text>
<text x="1009.0" y="634.2" font-size="8.7" fill="#f27878" color="#f27878" text-anchor="middle">-304.04</text>
<text x="1086.5" y="634.2" font-size="8.7" fill="#f27878" color="#f27878" text-anchor="middle">-260.11</text>
<rect x="833.5" y="478.6" width="42" height="171.4" rx="3.5" fill="#e7ecf5" fill-opacity=".88" stroke="#8f99ae" stroke-width="1.1"/>
<text x="854.6" y="486.7" font-size="8.7" fill="#2a2a2a" text-anchor="middle">6250.22</text>
<text x="854.6" y="515.8" font-size="8.8" fill="#2a2af0" color="#2a2af0" text-anchor="middle" stroke-width=".3" paint-order="stroke" style="stroke:currentColor">511</text>
<text x="854.6" y="528.9" font-size="8.8" fill="#2a2af0" color="#2a2af0" text-anchor="middle" stroke-width=".3" paint-order="stroke" style="stroke:currentColor">0.4%</text>
<text x="854.6" y="556.2" font-size="8.8" fill="#2a2af0" color="#2a2af0" text-anchor="middle" stroke-width=".3" paint-order="stroke" style="stroke:currentColor">9.31</text>
<text x="854.6" y="583.7" font-size="8.8" fill="#ee2020" color="#ee2020" text-anchor="middle" stroke-width=".3" paint-order="stroke" style="stroke:currentColor">-0.45</text>
<text x="854.6" y="610.9" font-size="8.8" fill="#2a2af0" color="#2a2af0" text-anchor="middle" stroke-width=".3" paint-order="stroke" style="stroke:currentColor">442.97</text>
<text x="854.6" y="638.7" font-size="8.8" fill="#ee2020" color="#ee2020" text-anchor="middle" stroke-width=".3" paint-order="stroke" style="stroke:currentColor">-260.84</text>
</svg>
<div class="a" style="left:515px;top:653.5px;width:565px;height:22px;background:#293955"></div>
<div class="t " style="left:1040px;top:657px;color:#fff">500%</div>
<div class="t " style="left:1075px;top:657px;color:#fff">−</div>
</body></html>
